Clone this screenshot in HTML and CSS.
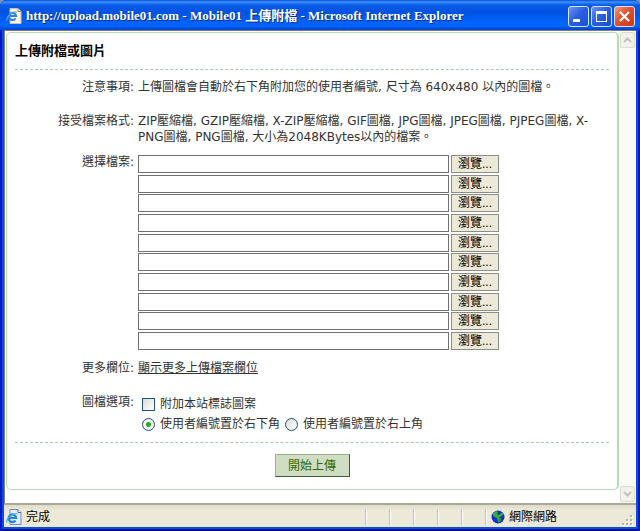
FILE: index.html
```html
<!DOCTYPE html>
<html lang="zh-Hant">
<head>
  <meta charset="UTF-8">
  <title>Mobile01 上傳附檔</title>
  <link rel="stylesheet" href="styles.css">
</head>
<body>
  <div class="window">
    <header class="titlebar">
      <svg class="title-icon" width="16" height="16" viewBox="0 0 16 16">
        <path d="M4 0.5h8l3 3v12H4z" fill="#f6f4e4" stroke="#c9c6b0"/>
        <path d="M12 0.5v3h3" fill="#fff" stroke="#8d8b7c"/>
        <path d="M9.5 10.5a3.6 3.6 0 1 1 .6-2.5H4" fill="none" stroke="#2a7fe0" stroke-width="2"/>
        <path d="M1 12.5C-.5 9 7 2.5 11 4" fill="none" stroke="#4f9cf0" stroke-width="1.2"/>
      </svg>
      <h1>http://upload.mobile01.com - Mobile01 上傳附檔 - Microsoft Internet Explorer</h1>
      <div class="controls">
        <button type="button" aria-label="最小化">
          <svg width="19" height="19" viewBox="0 0 19 19"><path d="M4 12h7v3H4z" fill="#fff"/></svg>
        </button>
        <button type="button" aria-label="最大化">
          <svg width="19" height="19" viewBox="0 0 19 19"><path d="M4 4h11v11H4zM5 7v7h9V7z" fill="#fff" fill-rule="evenodd"/></svg>
        </button>
        <button type="button" class="close" aria-label="關閉">
          <svg width="19" height="19" viewBox="0 0 19 19"><path d="M5 5l9 9M14 5l-9 9" stroke="#fff" stroke-width="2.2" fill="none"/></svg>
        </button>
      </div>
    </header>

    <div class="viewport">
      <main class="page">
        <form class="panel">
          <h2>上傳附檔或圖片</h2>

          <div class="fields">
            <div class="name">注意事項:</div>
            <div class="value">上傳圖檔會自動於右下角附加您的使用者編號, 尺寸為 640x480 以內的圖檔。</div>

            <div class="name spaced">接受檔案格式:</div>
            <div class="value spaced">ZIP壓縮檔, GZIP壓縮檔, X-ZIP壓縮檔, GIF圖檔, JPG圖檔, JPEG圖檔, PJPEG圖檔, X-PNG圖檔, PNG圖檔, 大小為2048KBytes以內的檔案。</div>

            <label class="name" for="file1">選擇檔案:</label>
            <div class="files">
              <div class="file"><input type="text" id="file1"><button type="button">瀏覽...</button></div>
              <div class="file"><input type="text" aria-label="檔案 2"><button type="button">瀏覽...</button></div>
              <div class="file"><input type="text" aria-label="檔案 3"><button type="button">瀏覽...</button></div>
              <div class="file"><input type="text" aria-label="檔案 4"><button type="button">瀏覽...</button></div>
              <div class="file"><input type="text" aria-label="檔案 5"><button type="button">瀏覽...</button></div>
              <div class="file"><input type="text" aria-label="檔案 6"><button type="button">瀏覽...</button></div>
              <div class="file"><input type="text" aria-label="檔案 7"><button type="button">瀏覽...</button></div>
              <div class="file"><input type="text" aria-label="檔案 8"><button type="button">瀏覽...</button></div>
              <div class="file"><input type="text" aria-label="檔案 9"><button type="button">瀏覽...</button></div>
              <div class="file"><input type="text" aria-label="檔案 10"><button type="button">瀏覽...</button></div>
            </div>

            <div class="name">更多欄位:</div>
            <div class="value"><a href="#">顯示更多上傳檔案欄位</a></div>

            <div class="name spaced">圖檔選項:</div>
            <div class="options spaced">
              <div class="option-line">
                <label><input type="checkbox" name="logo">附加本站標誌圖案</label>
              </div>
              <div class="option-line">
                <label><input type="radio" name="pos" value="bottom" checked>使用者編號置於右下角</label>
                <label><input type="radio" name="pos" value="top">使用者編號置於右上角</label>
              </div>
            </div>
          </div>

          <div class="submit-row">
            <button type="submit" class="submit">開始上傳</button>
          </div>
        </form>
      </main>

      <div class="scrollbar">
        <button type="button" aria-label="向上捲動">
          <svg width="9" height="6" viewBox="0 0 9 6"><path d="M1 5l3.5-3.5L8 5" fill="none" stroke="#c4c3b8" stroke-width="2"/></svg>
        </button>
        <button type="button" aria-label="向下捲動">
          <svg width="9" height="6" viewBox="0 0 9 6"><path d="M1 1l3.5 3.5L8 1" fill="none" stroke="#c4c3b8" stroke-width="2"/></svg>
        </button>
      </div>
    </div>

    <footer class="statusbar">
      <div class="status">
        <svg width="16" height="16" viewBox="0 0 16 16">
          <path d="M4 0.5h8l3 3v12H4z" fill="#e4ebfb" stroke="#7388c4"/>
          <path d="M12 0.5v3h3" fill="#fff" stroke="#5268a8"/>
          <path d="M9.5 11.5a3.8 3.8 0 1 1 .7-2.5H3.5" fill="none" stroke="#1f86d8" stroke-width="2.2"/>
          <path d="M1 13.5C-.5 10 7 3.5 11.5 5" fill="none" stroke="#48a8ea" stroke-width="1.2"/>
        </svg>
        <span>完成</span>
      </div>
      <div class="cell"></div>
      <div class="cell"></div>
      <div class="cell"></div>
      <div class="cell"></div>
      <div class="cell"></div>
      <div class="zone">
        <svg width="14" height="14" viewBox="0 0 14 14">
          <circle cx="7" cy="7" r="6.5" fill="#1030c8"/>
          <path d="M2 3.5L5 1l2 1-1 2 2 1 3-2.5 1.5 1.5-2 2.5L8 7l2 2-1 3.5-2-1L6 8 3.5 7 2 5.5z" fill="#35b030"/>
          <path d="M12 3a6.5 6.5 0 0 1-8.5 9.5A6.5 6.5 0 0 0 12 3z" fill="#0a1460"/>
          <path d="M8 8l2 1-1 3-1-1z" fill="#2a9828"/>
        </svg>
        <span>網際網路</span>
      </div>
      <svg class="grip" width="12" height="12" viewBox="0 0 12 12">
        <path d="M9 1h2v2H9zM5 5h2v2H5zM9 5h2v2H9zM1 9h2v2H1zM5 9h2v2H5zM9 9h2v2H9z" fill="#fff"/>
        <path d="M8 0h2v2H8zM4 4h2v2H4zM8 4h2v2H8zM0 8h2v2H0zM4 8h2v2H4zM8 8h2v2H8z" fill="#b8b4a0"/>
      </svg>
    </footer>
  </div>
</body>
</html>
```
FILE: styles.css
```css
* {
  box-sizing: border-box;
}

body {
  margin: 0;
  background: #7a8fb8;
  color: #333;
  font: 12px/16px "DejaVu Sans", "Noto Sans CJK TC", sans-serif;
}

h1, h2 {
  margin: 0;
}

button, input {
  margin: 0;
  padding: 0;
  font: inherit;
}

svg {
  display: block;
  flex: none;
}

/* window frame */
.window {
  display: flex;
  flex-direction: column;
  min-height: 100vh;
  padding: 0 4px 4px;
  background: #0a4be0;
  border-radius: 7px 7px 0 0;
  box-shadow: inset 2px 0 #0019c8, inset -2px 0 #0019c8, inset 0 -2px #00138c;
  overflow: hidden;
}

.titlebar {
  display: flex;
  align-items: center;
  height: 30px;
  margin: 0 -4px;
  padding: 2px 5px 0 6px;
  background: linear-gradient(#0a4fd0 0, #3a92ff 2px, #0a5be8 5px, #0052e0 12px, #0062fc 22px, #0064ff 26px, #0040c8 30px);
}

.titlebar h1 {
  flex: 1;
  margin-left: 4px;
  color: #fff;
  font: bold 13px/16px "Liberation Serif", "Noto Sans CJK TC", serif;
  text-shadow: 1px 1px #0a2a80;
  white-space: nowrap;
}

.controls {
  display: flex;
  gap: 2px;
}

.controls button {
  width: 21px;
  height: 21px;
  border: 1px solid #d8e4ff;
  border-radius: 3px;
  background: linear-gradient(135deg, #6a97f5, #2a5fe0 45%, #1a4fd0);
}

.controls .close {
  background: linear-gradient(135deg, #f09a80, #e0502c 45%, #c83a14);
}

/* page area */
.viewport {
  display: flex;
  flex: 1;
  border-top: 1px solid #807e70;
  border-left: 1px solid #807e70;
  background: #fff;
}

.page {
  flex: 1;
  padding: 1px 0 12px 1px;
}

.panel {
  border: 1px solid #b4dcb4;
  border-right-width: 2px;
  border-radius: 5px;
  padding: 0 8px 12px;
}

.panel h2 {
  border-bottom: 1px dashed #a8cca8;
  color: #000;
  font-size: 13px;
  line-height: 36px;
}

.fields {
  display: grid;
  grid-template-columns: 119px 1fr;
  column-gap: 4px;
  row-gap: 9px;
  padding: 9px 0 8px;
  border-bottom: 1px dashed #a8cca8;
}

.name {
  text-align: right;
}

.spaced {
  margin-top: 9px;
}

.fields a {
  color: #333;
}

.files {
  display: grid;
  grid-auto-rows: 1fr;
  height: 197px;
}

.file {
  display: flex;
  align-items: center;
  gap: 2px;
}

.file input {
  width: 311px;
  height: 18px;
  border: 1px solid #707070;
  background: #fff;
}

.file button {
  width: 48px;
  height: 18px;
  border: 1px solid #8c8c88;
  background: #ece9d8;
  color: #000;
  font: 12px/14px "Liberation Sans", "Noto Sans CJK TC", sans-serif;
}

.option-line {
  display: flex;
  align-items: center;
  gap: 5px;
  height: 20px;
  padding-left: 4px;
}

.option-line label {
  display: flex;
  align-items: center;
  gap: 5px;
}

.option-line input {
  appearance: none;
  width: 13px;
  height: 13px;
  border: 1px solid #1c5180;
  background: linear-gradient(135deg, #dcdcd6, #fff);
}

.option-line input[type="radio"] {
  border-radius: 50%;
}

.option-line input[type="radio"]:checked {
  background: radial-gradient(circle, #22b022 2px, #f4f4f0 3px);
}

.submit-row {
  display: flex;
  justify-content: center;
  padding-top: 11px;
}

.submit {
  width: 75px;
  height: 23px;
  border: 1px solid;
  border-color: #94b484 #3c5c34 #3c5c34 #94b484;
  background: #d0dcc4;
  color: #2c6c00;
}

.scrollbar {
  display: flex;
  flex-direction: column;
  justify-content: space-between;
  width: 17px;
  padding: 1px;
  background: #fbfbf6;
}

.scrollbar button {
  display: flex;
  align-items: center;
  justify-content: center;
  width: 15px;
  height: 16px;
  border: 1px solid #dedcd0;
  border-radius: 2px;
  background: #f2f1ea;
}

/* status bar */
.statusbar {
  display: flex;
  align-items: center;
  height: 24px;
  padding: 2px 2px 0;
  border-top: 2px solid #aca899;
  background: linear-gradient(#e0dcc8, #ece9d8 5px);
  color: #000;
}

.status, .zone {
  display: flex;
  align-items: center;
  gap: 4px;
}

.status {
  flex: 1;
}

.cell, .zone {
  height: 16px;
  border-left: 1px solid #c8c4b0;
  box-shadow: inset 1px 0 #fff;
}

.cell {
  width: 24px;
}

.zone {
  width: 137px;
  padding-left: 5px;
}

.grip {
  align-self: flex-end;
}
```
